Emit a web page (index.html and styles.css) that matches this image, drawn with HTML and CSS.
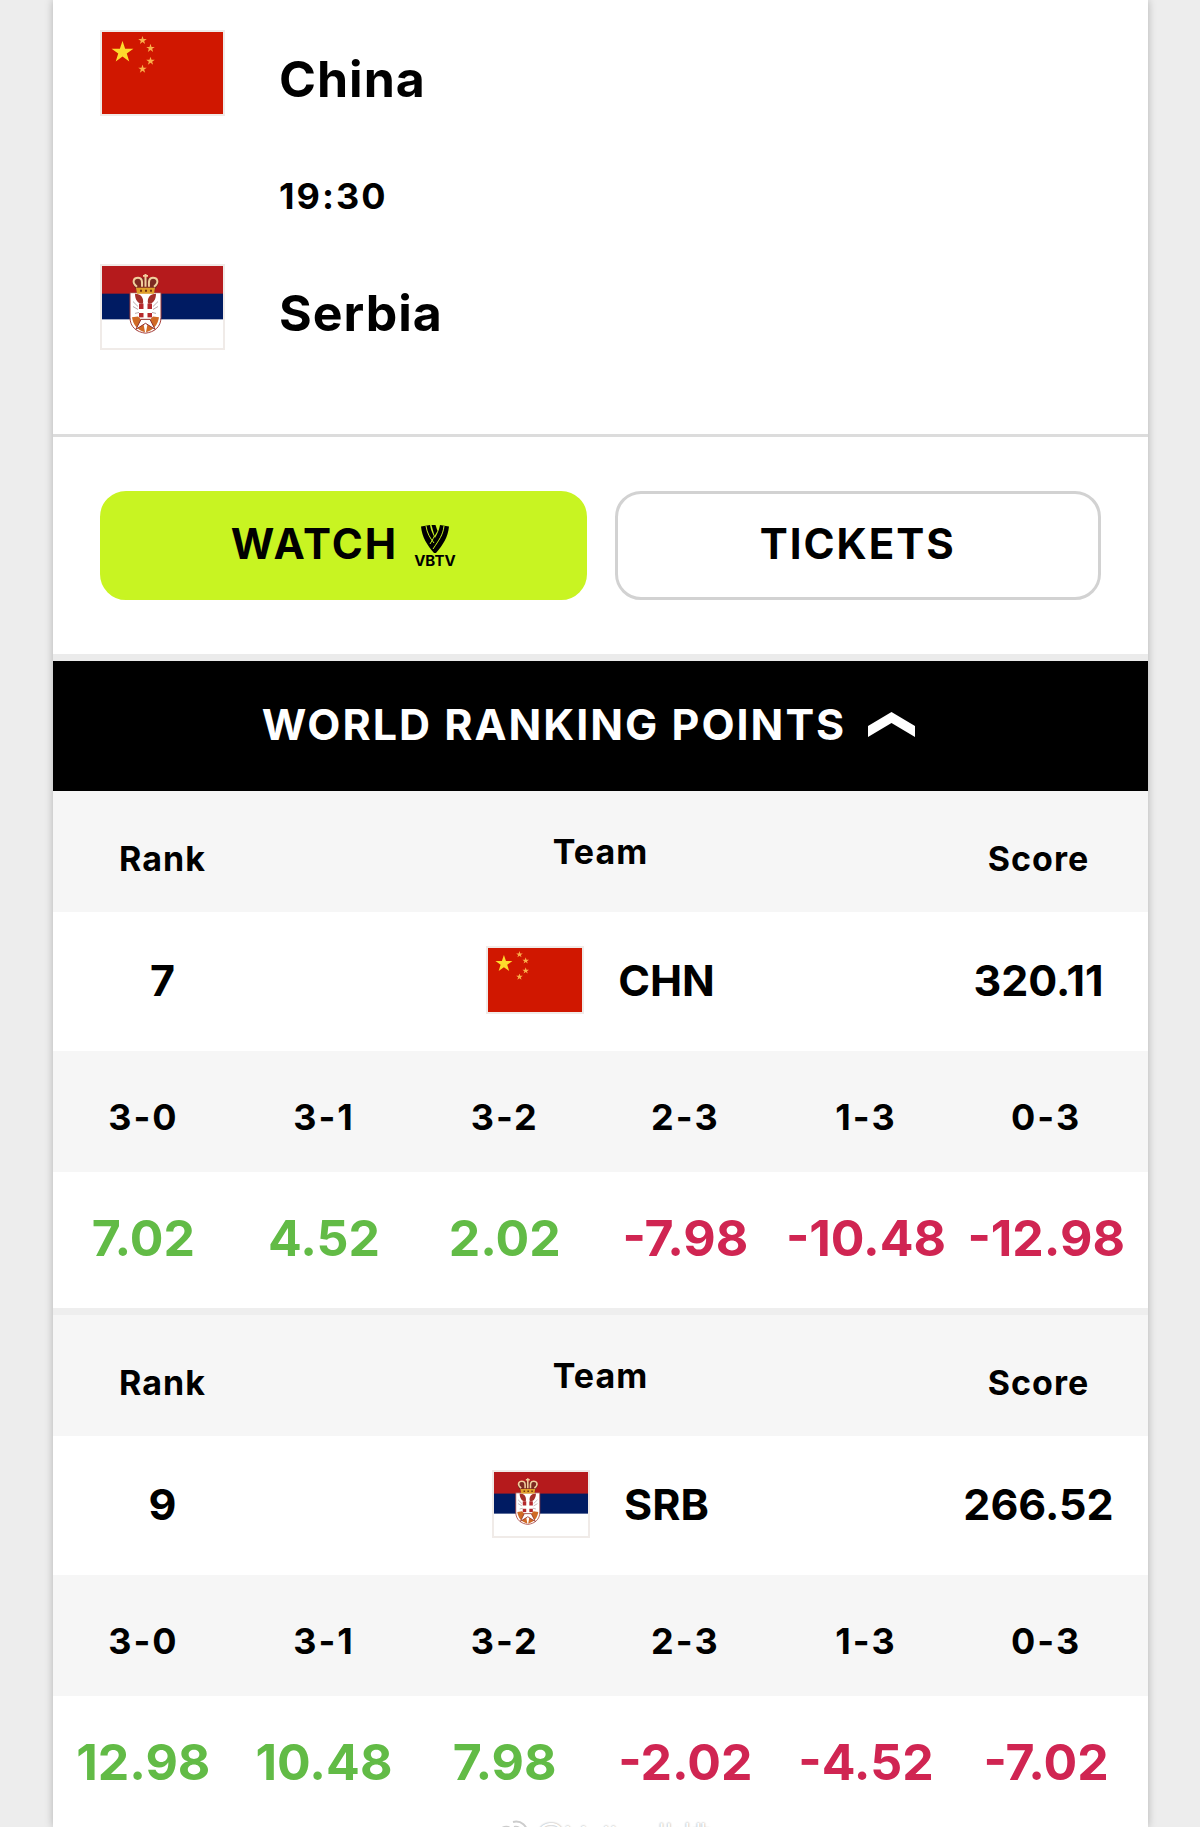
FILE: index.html
```html
<!DOCTYPE html>
<html lang="en">
<head>
<meta charset="utf-8">
<meta name="viewport" content="width=device-width, initial-scale=1">
<title>China v Serbia</title>
<link rel="stylesheet" href="styles.css">
</head>
<body>
<svg class="defs" aria-hidden="true">
  <symbol id="star" viewBox="-10 -10 20 20">
    <path d="M0-10 2.3-3.1 9.5-3.1 3.7 1.2 5.9 8.1 0 3.8-5.9 8.1-3.7 1.2-9.5-3.1-2.3-3.1z"/>
  </symbol>
  <symbol id="flag-chn" viewBox="0 0 121 83" preserveAspectRatio="none">
    <rect width="121" height="83" fill="#d01700"/>
    <g fill="#fddc2c">
      <use href="#star" x="9" y="9" width="23" height="23"/>
      <g fill="#f9b04a">
        <use href="#star" x="36" y="4" width="9" height="9"/>
        <use href="#star" x="44" y="12" width="9" height="9"/>
        <use href="#star" x="44" y="25" width="9" height="9"/>
        <use href="#star" x="36" y="33" width="9" height="9"/>
      </g>
    </g>
  </symbol>
  <symbol id="flag-srb" viewBox="0 0 121 83" preserveAspectRatio="none">
    <rect width="121" height="83" fill="#fff"/>
    <rect width="121" height="54" fill="#001b62"/>
    <rect width="121" height="28" fill="#b51a1c"/>
    <path d="M28 27h31v25c0 10-7 15-15.500 16C35 67 28 62 28 52z" fill="#fff"/>
    <path d="M28 27h31v25c0 10-7 15-15.500 16C35 67 28 62 28 52z" fill="none" stroke="#a33a35"/>
    <path d="M30 52c1 7 5 13 13 15l-2-11-5-5zM57 52c-1 7-5 13-13 15l2-11 5-5z" fill="#d06a25"/>
    <path d="M33 28c6 0 9 4 8 10-4 1-8-3-8-10zM54 28c-6 0-9 4-8 10 4 1 8-3 8-10z" fill="#a5302a"/>
    <path d="M37 38h13v14H37z" fill="#b5282c"/>
    <path d="M43.500 37v17M36 45.500h15" stroke="#fff" stroke-width="4"/>
    <path d="M39 54h9l5 10-9.500-6-9.500 6z" fill="#fff" stroke="#8e2a26"/>
    <path d="M31 36l5 5M31 41l5 3M56 36l-5 5M56 41l-5 3M33 48l4-1M54 48l-4-1" stroke="#b9a6a6"/>
    <path d="M35 26c-2-5-6-7-4-11 3-4 9-4 12.500-2C47 11 53 11 56 15c2 4-2 6-4 11z" fill="#7d2a22"/>
    <path d="M34 22h19l-1 6H35z" fill="#e0a02a"/>
    <path d="M35 21c-6-5-3-9 1-9 5 0 4 5 4 9M52 21c6-5 3-9-1-9-5 0-4 5-4 9M43.500 21V8M41 10h5" fill="none" stroke="#f1cf9d" stroke-width="2"/>
    <path d="M38 25h2M43 25h2M48 25h2" stroke="#75320f" stroke-width="2"/>
  </symbol>
</svg>

<main class="card">
  <section class="match" aria-label="Match">
    <svg class="flag flag-large" role="img" aria-label="Flag of China"><use href="#flag-chn"/></svg>
    <h2 class="name">China</h2>
    <time class="time" datetime="19:30">19:30</time>
    <svg class="flag flag-large" role="img" aria-label="Flag of Serbia"><use href="#flag-srb"/></svg>
    <h2 class="name">Serbia</h2>
  </section>

  <section class="actions" aria-label="Watch and tickets">
    <button class="button button-watch" type="button">
      <span>WATCH</span>
      <span class="vbtv">
        <svg class="vbtv-mark" viewBox="0 0 28 28" aria-hidden="true">
          <path d="M0 1.500 9 0c1 6 3 9 5 13 2-4 4-7 5-13l9 1.500C27 12 22 20 15 28h-2C6 20 1 12 0 1.500z"/>
          <path d="M5 1c1 7 4 12 8 17M15.500 1C16 6 14 11 9 19M23 1c-1 9-5 14-11 23" fill="none" stroke="#c8f422" stroke-width="1"/>
          <path d="M10.500 0h4l2 6-3 5z"/>
        </svg>
        <span>VBTV</span>
      </span>
    </button>
    <button class="button" type="button">TICKETS</button>
  </section>

  <button class="toggle" type="button" aria-expanded="true">
    <span>WORLD RANKING POINTS</span>
    <svg class="chevron" viewBox="0 0 47 25" aria-hidden="true"><path d="M0 14 23.500 0 47 14v11L23.500 11 0 25z"/></svg>
  </button>

  <section class="ranking" aria-label="China ranking">
    <table class="team">
      <thead><tr><th class="low">Rank</th><th>Team</th><th class="low">Score</th></tr></thead>
      <tbody><tr>
        <td>7</td>
        <td><span class="team-name"><svg class="flag flag-small" aria-hidden="true"><use href="#flag-chn"/></svg>CHN</span></td>
        <td>320.11</td>
      </tr></tbody>
    </table>
    <table class="points">
      <thead><tr><th>3-0</th><th>3-1</th><th>3-2</th><th>2-3</th><th>1-3</th><th>0-3</th></tr></thead>
      <tbody><tr>
        <td class="gain">7.02</td><td class="gain">4.52</td><td class="gain">2.02</td>
        <td class="loss">-7.98</td><td class="loss">-10.48</td><td class="loss">-12.98</td>
      </tr></tbody>
    </table>
  </section>

  <section class="ranking" aria-label="Serbia ranking">
    <table class="team">
      <thead><tr><th class="low">Rank</th><th>Team</th><th class="low">Score</th></tr></thead>
      <tbody><tr>
        <td>9</td>
        <td><span class="team-name"><svg class="flag flag-small" aria-hidden="true"><use href="#flag-srb"/></svg>SRB</span></td>
        <td>266.52</td>
      </tr></tbody>
    </table>
    <table class="points">
      <thead><tr><th>3-0</th><th>3-1</th><th>3-2</th><th>2-3</th><th>1-3</th><th>0-3</th></tr></thead>
      <tbody><tr>
        <td class="gain">12.98</td><td class="gain">10.48</td><td class="gain">7.98</td>
        <td class="loss">-2.02</td><td class="loss">-4.52</td><td class="loss">-7.02</td>
      </tr></tbody>
    </table>
  </section>

  <div class="watermark">
    <svg class="watermark-icon" viewBox="0 0 40 34" aria-hidden="true">
      <path d="M2 20C4 12 12 6 18 7c4 1 3 5 3 5 6-2 10 0 8 5M23 2c8-2 15 4 14 12M24 7c5-1 9 3 8 8"/>
    </svg>
    <span>@Volley北排</span>
  </div>
</main>
</body>
</html>
```

FILE: styles.css
```css
* {
  box-sizing: border-box;
}

body {
  height: 100vh;
  margin: 0;
  overflow: hidden;
  background: #ededed;
  color: #000;
  font-family: Inter, "Noto Sans CJK SC", sans-serif;
  font-weight: 700;
}

.defs {
  display: none;
}

/* The card fills the viewport; what is below the fold is clipped */
.card {
  position: relative;
  height: 100vh;
  margin: 0 52px 0 53px;
  overflow: hidden;
  background: #fff;
  box-shadow: 0 0 8px rgba(0, 0, 0, 0.25);
}

.flag {
  display: block;
  border: 2px solid #f0ebe8;
}

.flag-large {
  width: 125px;
  height: 86px;
}

.flag-small {
  width: 98px;
  height: 68px;
}

/* Match */
.match {
  display: grid;
  grid-template-columns: 125px 1fr;
  grid-template-rows: 98px 136px 98px;
  column-gap: 54px;
  padding: 30px 47px 72px;
  border-bottom: 3px solid #dcdcdc;
}

.name {
  margin: 0;
  font-size: 50px;
  font-weight: 700;
  line-height: 98px;
  letter-spacing: 1px;
}

.time {
  grid-column: 2;
  align-self: center;
  font-size: 36px;
  letter-spacing: 2px;
}

/* Actions */
.actions {
  display: grid;
  grid-template-columns: 1fr 1fr;
  gap: 28px;
  padding: 54px 47px 54px;
  border-bottom: 7px solid #ebebeb;
}

.button {
  display: flex;
  align-items: center;
  justify-content: center;
  gap: 16px;
  height: 109px;
  padding: 0 0 4px;
  border: 3px solid #d2d2d2;
  border-radius: 26px;
  background: #fff;
  color: #000;
  font: inherit;
  font-size: 42px;
  letter-spacing: 2px;
}

.button-watch {
  border-color: #c8f422;
  background: #c8f422;
}

.vbtv {
  display: flex;
  flex-direction: column;
  align-items: center;
  padding-top: 6px;
  font-size: 15px;
  line-height: 16px;
  letter-spacing: 0;
}

.vbtv-mark {
  width: 28px;
  height: 28px;
}

/* Ranking */
.toggle {
  display: flex;
  align-items: center;
  justify-content: center;
  gap: 22px;
  width: 100%;
  height: 130px;
  padding: 0 24px 4px 0;
  border: 0;
  background: #000;
  color: #fff;
  font: inherit;
  font-size: 43px;
  letter-spacing: 2px;
}

.chevron {
  width: 47px;
  height: 25px;
  fill: #fff;
}

.ranking + .ranking {
  border-top: 7px solid #eee;
}

table {
  width: 100%;
  border-collapse: collapse;
  table-layout: fixed;
  text-align: center;
}

th,
td {
  padding: 0;
}

thead {
  background: #f6f6f6;
}

th {
  height: 121px;
  font-size: 34px;
  font-weight: 700;
  letter-spacing: 1px;
}

.team .low {
  padding-top: 14px;
}

.team th:nth-child(2) {
  width: 60%;
}

.team td {
  height: 139px;
  padding-bottom: 4px;
  font-size: 43px;
}

.team-name {
  display: flex;
  align-items: center;
  justify-content: center;
  gap: 34px;
}

.points th {
  width: 16.5%;
  padding-top: 10px;
  font-size: 36px;
  letter-spacing: 2px;
}

.points td {
  height: 136px;
  padding-bottom: 4px;
  font-size: 50px;
}

.points th:last-child,
.points td:last-child {
  width: 17.5%;
  padding-right: 12px;
}

.gain {
  color: #62bb46;
}

.loss {
  color: #d02552;
}

/* Watermark over the bottom edge */
.watermark {
  position: absolute;
  right: 0;
  bottom: -30px;
  left: 0;
  display: flex;
  align-items: center;
  justify-content: center;
  gap: 6px;
  color: #fff;
  font-size: 30px;
  font-weight: 400;
  line-height: 40px;
  text-shadow: 0 0 2px #888;
}

.watermark-icon {
  width: 40px;
  height: 34px;
  fill: none;
  stroke: #ccc;
  stroke-width: 2;
}
```
